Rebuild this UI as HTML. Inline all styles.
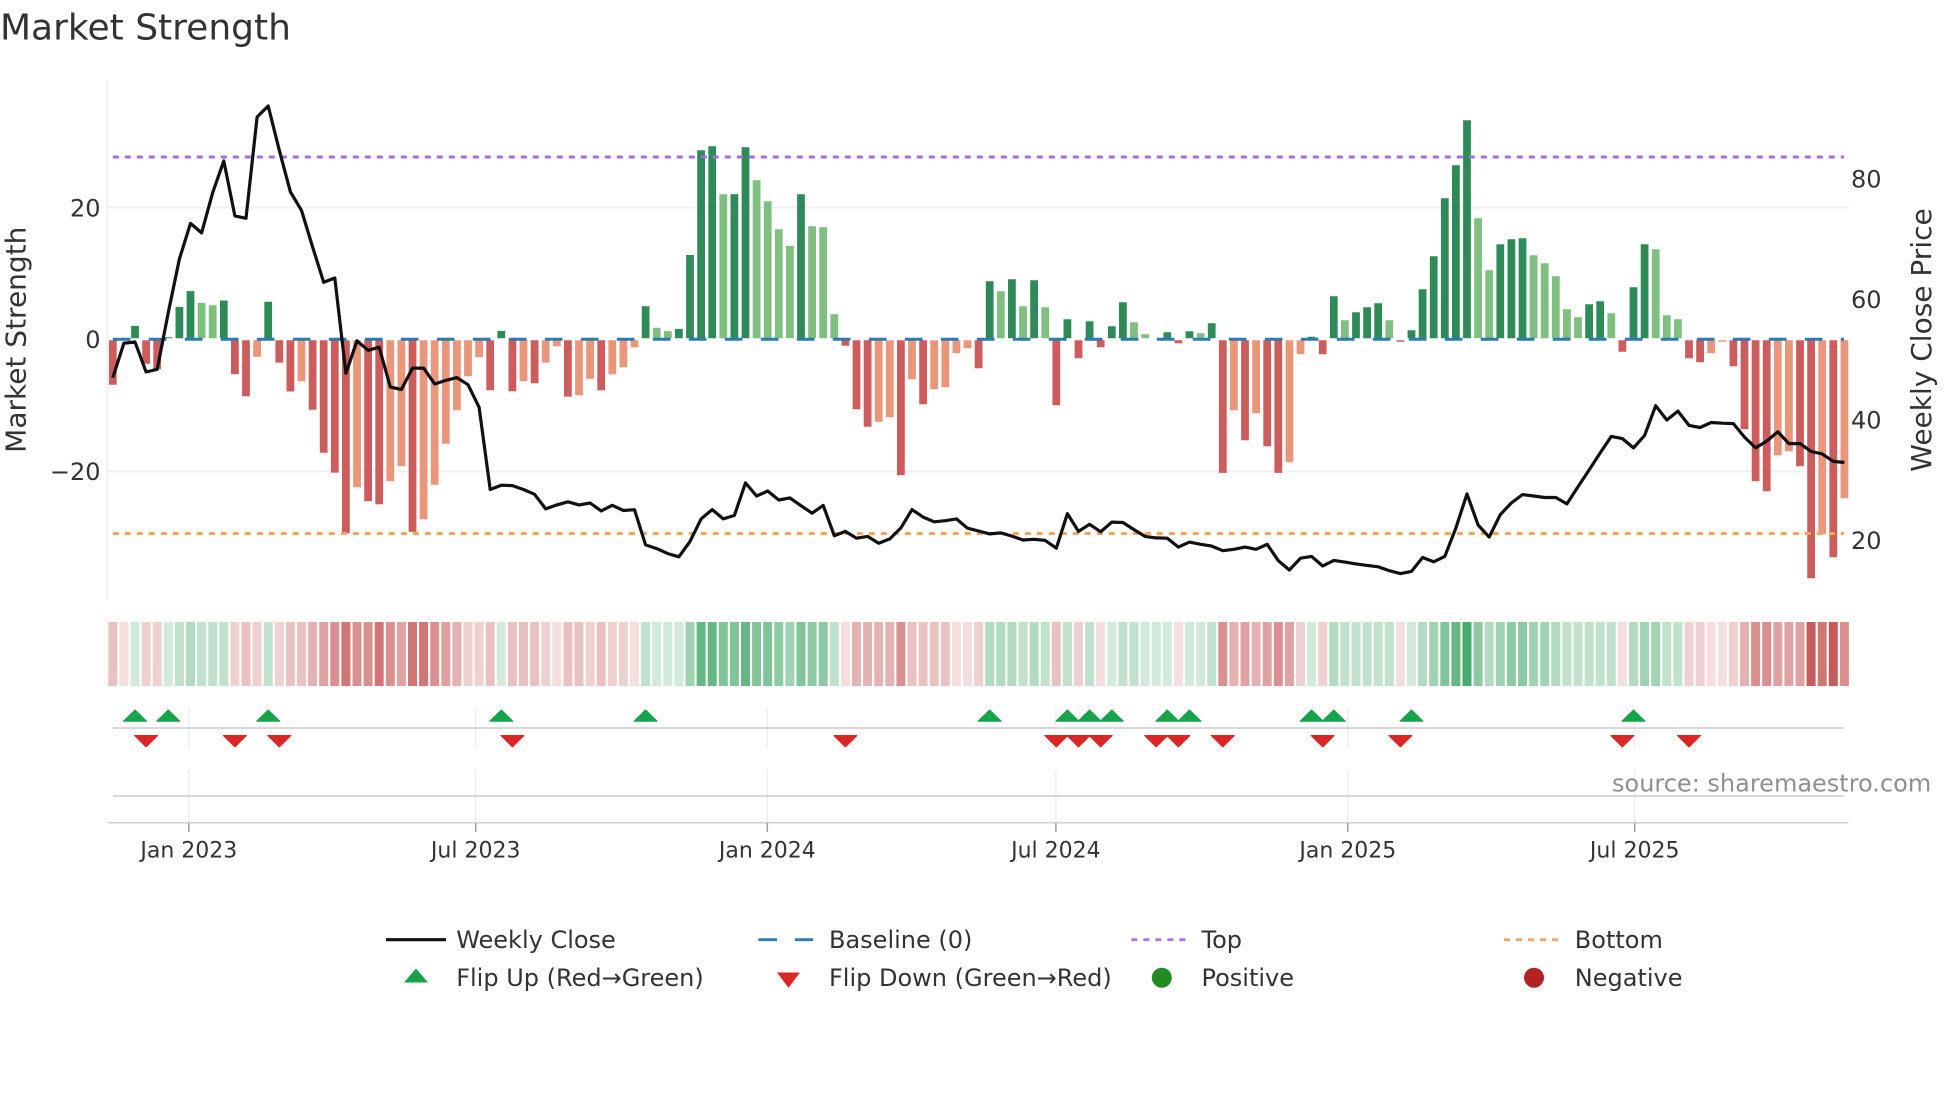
<!DOCTYPE html>
<html lang="en"><head><meta charset="utf-8"><title>Market Strength</title>
<style>
html,body{margin:0;padding:0;background:#fff}
svg{display:block}
text{font-family:"DejaVu Sans","Liberation Sans",sans-serif;fill:#333}
.t{font-size:24px}.x{font-size:22px;text-anchor:middle}.l{font-size:24px}
</style></head><body>
<svg width="1960" height="1102" viewBox="0 0 1960 1102" xmlns="http://www.w3.org/2000/svg">
<rect width="1960" height="1102" fill="#fff"/>
<text x="0" y="39.5" style="font-size:36px">Market Strength</text>

<!-- grid & spine -->
<path d="M107.3 80V600" stroke="#efefef" stroke-width="1.5" fill="none"/>
<path d="M107 207.6H1849M107 471.4H1849" stroke="#f0f0f0" stroke-width="2" fill="none"/>

<!-- bars -->
<g transform="translate(112.8,339.3) scale(11.1,1)" fill="none" stroke-width=".7">
<path stroke="#2e8b57" d="M2-1V-13.4M5-1V-2M6-1V-32.4M7-1V-48.2M10-1V-38.8M14-1V-37.6M35-1V-8.3M48-1V-33M51-1V-10.4M52-1V-84.3M53-1V-189M54-1V-193M56-1V-145M57-1V-192M62-1V-145M79-1V-58M81-1V-60M83-1V-59M86-1V-20M88-1V-18M90-1V-13M91-1V-37M95-1V-7M97-1V-8M99-1V-16M108-1V-2.5M110-1V-43M112-1V-27M113-1V-32M114-1V-36M117-1V-9M118-1V-50M119-1V-83M120-1V-141M121-1V-174M122-1V-219M125-1V-95M126-1V-100M127-1V-101M133-1V-35M134-1V-38M137-1V-52M138-1V-95"/>
<path stroke="#7fbf7f" d="M8-1V-36.4M9-1V-34M49-1V-11.5M50-1V-8.2M55-1V-145M58-1V-159M59-1V-138M60-1V-110M61-1V-93.6M63-1V-113M64-1V-112M65-1V-25M80-1V-48M82-1V-33M84-1V-32M92-1V-17M93-1V-5M98-1V-6M111-1V-19M115-1V-19M123-1V-121M124-1V-69M128-1V-84M129-1V-76M130-1V-63M131-1V-30M132-1V-22M135-1V-26M139-1V-90M140-1V-24M141-1V-20"/>
<path stroke="#cd5c5c" d="M0 1V45.5M3 1V24.5M4 1V30M11 1V34.8M12 1V57M15 1V23.3M16 1V52.2M18 1V70.4M19 1V113.5M20 1V133.3M21 1V194M23 1V162M24 1V165M27 1V192.6M34 1V51M36 1V52M38 1V44M41 1V57.3M44 1V51M66 1V6.4M67 1V70M68 1V87.5M71 1V136M73 1V65M78 1V29M85 1V66M87 1V19M89 1V8M96 1V4M100 1V133.6M102 1V101M104 1V107M105 1V133.6M109 1V15M116 1V2.5M136 1V12.5M142 1V19M143 1V23M146 1V27M147 1V90M148 1V142M149 1V152M152 1V127M153 1V239M155 1V218"/>
<path stroke="#e9967a" d="M13 1V17.4M17 1V41.9M22 1V148M25 1V142M26 1V127M28 1V180M29 1V145.5M30 1V104.4M31 1V71M32 1V37M33 1V18M37 1V42M39 1V23.3M40 1V7M42 1V56M43 1V39.5M45 1V35M46 1V28M47 1V8M69 1V82.5M70 1V78M72 1V40M74 1V50M75 1V48M76 1V14M77 1V9M101 1V71M103 1V74M106 1V123M107 1V15M144 1V14M145 1V2.5M150 1V116M151 1V112M154 1V195M156 1V159"/>
</g>

<!-- reference lines -->
<path d="M112.8 339.3H1844" stroke="#2b7bb0" stroke-width="3" stroke-dasharray="17.7 18.3" fill="none"/>
<path d="M112.8 157H1844" stroke="#a56ee0" stroke-width="3" stroke-dasharray="6 6" fill="none"/>
<path d="M112.8 533.5H1844" stroke="#f2a663" stroke-width="3" stroke-dasharray="6 6" fill="none"/>

<!-- price line -->
<polyline transform="translate(112.8,0) scale(11.1,1)" fill="none" stroke="#111" stroke-width="3.2" stroke-linejoin="round" vector-effect="non-scaling-stroke" points="0,377.6 1,343.2 2,342 3,372 4,369.3 5,312.4 6,259 7,223.4 8,232.9 9,192.6 10,160.9 11,215.9 12,218.3 13,117 14,106 15,150.3 16,191.8 17,210.4 18,247 19,282.3 20,278 21,373.3 22,340.8 23,350.3 24,347.2 25,387.1 26,389.5 27,368.1 28,368.1 29,384 30,380.4 31,377.6 32,384.7 33,407.3 34,489.5 35,485.2 36,485.6 37,489.5 38,494.3 39,508.9 40,504.9 41,501.8 42,504.9 43,503 44,510.9 45,505.3 46,510.5 47,509.7 48,544.9 49,548.6 50,553.6 51,556.8 52,541.4 53,518.9 54,509.6 55,518.9 56,515.4 57,482.9 58,496 59,491 60,500 61,497.9 62,505.7 63,513.2 64,505.4 65,535.7 66,531.4 67,538.2 68,536.4 69,543.2 70,538.9 71,527.9 72,509.6 73,517.1 74,521.8 75,520.7 76,518.9 77,528.2 78,531 79,533.9 80,532.9 81,536.1 82,540 83,539.3 84,540.4 85,548.2 86,513.6 87,531.4 88,524.3 89,531.8 90,522.1 91,522.5 92,529.6 93,536.4 94,537.9 95,538.2 96,547.1 97,542.1 98,544.3 99,546.1 100,550.7 101,549.3 102,547.1 103,549.3 104,544.3 105,560.7 106,570 107,558.2 108,556.4 109,566 110,560.4 111,562.1 112,563.9 113,565.4 114,566.8 115,570.7 116,573.6 117,571.4 118,557.5 119,561.8 120,556.4 121,527.9 122,493.9 123,525 124,537.1 125,514.6 126,502.9 127,494.6 128,496 129,497.5 130,497.5 131,503.9 132,486.8 133,470 134,452.9 135,436.4 136,438.6 137,447.9 138,435.4 139,405.7 140,420 141,411.1 142,425.4 143,427.5 144,422.5 145,423.2 146,423.6 147,437.1 148,447.9 149,441.1 150,431.8 151,443.6 152,443.6 153,451.4 154,453.9 155,461.4 156,462.5"/>

<!-- axis labels -->
<g text-anchor="end">
<text class="t" x="100.5" y="216.3">20</text>
<text class="t" x="100.5" y="348">0</text>
<text class="t" x="100.5" y="480.1">−20</text>
</g>
<text class="t" x="1851" y="187.3">80</text>
<text class="t" x="1851" y="308">60</text>
<text class="t" x="1851" y="428.3">40</text>
<text class="t" x="1851" y="549.1">20</text>
<text transform="translate(25.5,339.7) rotate(-90)" text-anchor="middle" style="font-size:28px">Market Strength</text>
<text transform="translate(1931,340) rotate(-90)" text-anchor="middle" style="font-size:28px">Weekly Close Price</text>

<!-- strip -->
<g transform="translate(112.8,622) scale(11.1,1)" fill="none" stroke-width=".81">
<g stroke="#b22222">
<path stroke-opacity=".15" d="M1 0v64M40 0v64M47 0v64M66 0v64M76 0v64M77 0v64M89 0v64M96 0v64M116 0v64M136 0v64M144 0v64M145 0v64"/>
<path stroke-opacity=".21" d="M3 0v64M4 0v64M11 0v64M13 0v64M15 0v64M32 0v64M33 0v64M39 0v64M43 0v64M45 0v64M46 0v64M78 0v64M87 0v64M107 0v64M109 0v64M142 0v64M143 0v64M146 0v64"/>
<path stroke-opacity=".28" d="M0 0v64M12 0v64M16 0v64M17 0v64M34 0v64M36 0v64M37 0v64M38 0v64M41 0v64M42 0v64M44 0v64M72 0v64M73 0v64M74 0v64M75 0v64M85 0v64"/>
<path stroke-opacity=".35" d="M18 0v64M31 0v64M67 0v64M68 0v64M69 0v64M70 0v64M101 0v64M103 0v64M147 0v64"/>
<path stroke-opacity=".42" d="M19 0v64M26 0v64M30 0v64M102 0v64M104 0v64M106 0v64M150 0v64M151 0v64M152 0v64"/>
<path stroke-opacity=".5" d="M20 0v64M22 0v64M23 0v64M25 0v64M29 0v64M71 0v64M100 0v64M105 0v64M148 0v64M149 0v64M156 0v64"/>
<path stroke-opacity=".62" d="M21 0v64M24 0v64M27 0v64M28 0v64M154 0v64"/>
<path stroke-opacity=".74" d="M153 0v64M155 0v64"/>
</g>
<g stroke="#1c9648">
<path stroke-opacity=".2" d="M2 0v64M5 0v64M35 0v64M49 0v64M50 0v64M51 0v64M90 0v64M93 0v64M94 0v64M95 0v64M97 0v64M98 0v64M108 0v64M117 0v64"/>
<path stroke-opacity=".28" d="M6 0v64M8 0v64M9 0v64M10 0v64M14 0v64M48 0v64M65 0v64M82 0v64M84 0v64M86 0v64M88 0v64M91 0v64M92 0v64M99 0v64M111 0v64M112 0v64M113 0v64M114 0v64M115 0v64M131 0v64M132 0v64M133 0v64M134 0v64M135 0v64M140 0v64M141 0v64"/>
<path stroke-opacity=".34" d="M7 0v64M79 0v64M80 0v64M81 0v64M83 0v64M110 0v64M118 0v64M124 0v64M130 0v64M137 0v64"/>
<path stroke-opacity=".42" d="M52 0v64M61 0v64M119 0v64M125 0v64M128 0v64M129 0v64M138 0v64M139 0v64"/>
<path stroke-opacity=".5" d="M60 0v64M63 0v64M64 0v64M123 0v64M126 0v64M127 0v64"/>
<path stroke-opacity=".56" d="M55 0v64M56 0v64M58 0v64M59 0v64M62 0v64M120 0v64"/>
<path stroke-opacity=".68" d="M53 0v64M54 0v64M57 0v64M121 0v64"/>
<path stroke-opacity=".8" d="M122 0v64"/>
</g>
</g>

<!-- x grid, axes -->
<path d="M188.8 708V748M188.8 770V822M475.7 708V748M475.7 770V822M767.3 708V748M767.3 770V822M1055.9 708V748M1055.9 770V822M1347.8 708V748M1347.8 770V822M1634.7 708V748M1634.7 770V822" stroke="#eceef1" stroke-width="1.3" fill="none"/>
<path d="M113 728H1843.7M113 796H1843.7" stroke="#d0d3d7" stroke-width="1.7" fill="none"/>
<path d="M108 822.7H1848.6" stroke="#cfd1d5" stroke-width="1.7" fill="none"/>
<path d="M188.8 823V832M475.7 823V832M767.3 823V832M1055.9 823V832M1347.8 823V832M1634.7 823V832" stroke="#9c9ea3" stroke-width="1.5" fill="none"/>

<!-- markers -->
<path fill="#16a34a" stroke="#16a34a" stroke-width="1.2" stroke-linejoin="round" d="M135 710l11.4 11.2h-22.8zM168.3 710l11.4 11.2h-22.8zM268.2 710l11.4 11.2h-22.8zM501.3 710l11.4 11.2h-22.8zM645.6 710l11.4 11.2h-22.8zM989.7 710l11.4 11.2h-22.8zM1067.4 710l11.4 11.2h-22.8zM1089.6 710l11.4 11.2h-22.8zM1111.8 710l11.4 11.2h-22.8zM1167.3 710l11.4 11.2h-22.8zM1189.5 710l11.4 11.2h-22.8zM1311.6 710l11.4 11.2h-22.8zM1333.8 710l11.4 11.2h-22.8zM1411.5 710l11.4 11.2h-22.8zM1633.5 710l11.4 11.2h-22.8z"/>
<path fill="#dc2626" stroke="#dc2626" stroke-width="1.2" stroke-linejoin="round" d="M146.1 746.8l-11.4-11.2h22.8zM234.9 746.8l-11.4-11.2h22.8zM279.3 746.8l-11.4-11.2h22.8zM512.4 746.8l-11.4-11.2h22.8zM845.4 746.8l-11.4-11.2h22.8zM1056.3 746.8l-11.4-11.2h22.8zM1078.5 746.8l-11.4-11.2h22.8zM1100.7 746.8l-11.4-11.2h22.8zM1156.2 746.8l-11.4-11.2h22.8zM1178.4 746.8l-11.4-11.2h22.8zM1222.8 746.8l-11.4-11.2h22.8zM1322.7 746.8l-11.4-11.2h22.8zM1400.4 746.8l-11.4-11.2h22.8zM1622.4 746.8l-11.4-11.2h22.8zM1689 746.8l-11.4-11.2h22.8z"/>

<!-- x labels -->
<text class="x" x="188.8" y="857.7">Jan 2023</text>
<text class="x" x="475.7" y="857.7">Jul 2023</text>
<text class="x" x="767.3" y="857.7">Jan 2024</text>
<text class="x" x="1055.9" y="857.7">Jul 2024</text>
<text class="x" x="1347.8" y="857.7">Jan 2025</text>
<text class="x" x="1634.7" y="857.7">Jul 2025</text>

<text x="1612" y="791.7" style="font-size:24px;fill:#8f8f8f">source: sharemaestro.com</text>

<!-- legend -->
<path d="M386 939.7H446" stroke="#111" stroke-width="3.2" fill="none"/>
<path d="M758.4 939.7H777M795 939.7H813" stroke="#2b7bb0" stroke-width="2.8" fill="none"/>
<path d="M1131.4 939.7H1186.4" stroke="#ab78e3" stroke-width="2.8" stroke-dasharray="6 6" fill="none"/>
<path d="M1504 939.7H1559" stroke="#f2a86b" stroke-width="2.8" stroke-dasharray="6 6" fill="none"/>
<path d="M416 968.5L428 982.5H404z" fill="#16a34a"/>
<path d="M788.5 987.8L777 972.5H800z" fill="#dc2626"/>
<circle cx="1161.8" cy="977.7" r="10" fill="#228b22"/>
<circle cx="1534" cy="977.7" r="10" fill="#b22222"/>
<text class="l" x="456.2" y="948">Weekly Close</text>
<text class="l" x="829" y="948">Baseline (0)</text>
<text class="l" x="1201.5" y="948">Top</text>
<text class="l" x="1574.8" y="948">Bottom</text>
<text class="l" x="456.2" y="986">Flip Up (Red→Green)</text>
<text class="l" x="829" y="986">Flip Down (Green→Red)</text>
<text class="l" x="1201.5" y="986">Positive</text>
<text class="l" x="1574.8" y="986">Negative</text>
</svg>
</body></html>
